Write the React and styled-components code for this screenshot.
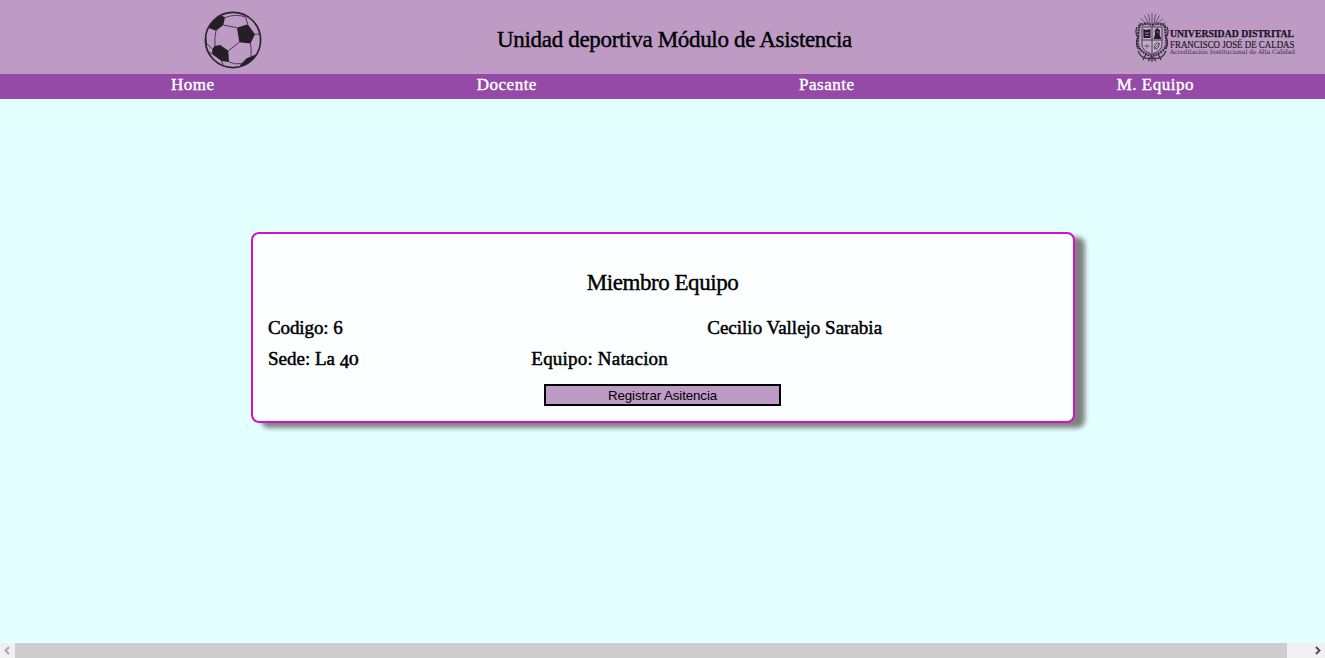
import React from "react";
import styled, { createGlobalStyle } from "styled-components";

const GlobalStyle = createGlobalStyle`
  * { box-sizing: border-box; }
  body { margin: 0; background: #e3ffff; overflow: hidden; }
`;

const Page = styled.div`
  height: 658px;
  display: flex;
  flex-direction: column;
  font-family: "Liberation Serif", serif;
  color: #000;
`;

const Header = styled.header`
  height: 74px;
  flex: none;
  display: grid;
  grid-template-columns: 466px 417px 1fr;
  align-items: center;
  background: #bd9bc5;
`;

const BallIcon = styled.svg`
  width: 60px;
  height: 60px;
  justify-self: center;
  margin-top: 6px;
`;

const CrestLogo = styled.svg`
  width: 172px;
  height: 56px;
  justify-self: end;
  margin-right: 19px;
`;

const Heading = styled.h1`
  margin: 0;
  padding-top: ${(p) => p.$offset || 0}px;
  text-align: center;
  white-space: nowrap;
  font-size: 23px;
  line-height: 30px;
  font-weight: 400;
  letter-spacing: ${(p) => p.$tracking}px;
  -webkit-text-stroke: 0.4px #000;
`;

const Nav = styled.nav`
  height: 25px;
  flex: none;
  display: flex;
  justify-content: space-around;
  padding-left: 40px;
  background: #954aa8;
`;

const NavLink = styled.a`
  color: #fff;
  font-size: 17px;
  line-height: 22px;
  letter-spacing: 0.5px;
  -webkit-text-stroke: 0.4px #fff;
`;

const Main = styled.main`
  flex: 1;
  padding-top: 133px;
`;

const Card = styled.section`
  width: 824px;
  height: 191px;
  margin-left: 251px;
  padding: 34px 15px 0;
  background: #fcffff;
  border: 2px solid #d210cf;
  border-radius: 8px;
  box-shadow: 10px 5px 5px gray;
`;

const CardTitle = styled(Heading)`
  padding-right: 1px;
`;

const Row = styled.div`
  display: grid;
  grid-template-columns: repeat(3, 1fr);
  height: 31px;
  margin-top: ${(p) => p.$gap || 0}px;
`;

const Field = styled.span`
  grid-column: span ${(p) => p.$span || 1};
  text-align: ${(p) => (p.$center ? "center" : "left")};
  white-space: nowrap;
  font-size: 19px;
  line-height: 31px;
  letter-spacing: ${(p) => p.$tracking || 0}px;
  -webkit-text-stroke: 0.5px #000;
`;

const LowDigit = styled.span`
  display: inline-block;
  line-height: 1;
  transform: ${(p) => (p.$flat ? "scale(1.05, 0.74)" : "translateY(3px)")};
  transform-origin: 50% 81%;
`;

const RegisterButton = styled.button`
  display: block;
  width: 237px;
  height: 22px;
  margin: 10px 0 0 276px;
  padding: 1px 0 0;
  border: 2px solid #000;
  background: #bd9bc5;
  color: #000;
  font: 13.33px/17px "Liberation Sans", sans-serif;
  letter-spacing: -0.1px;
`;

const ScrollBar = styled.div`
  height: 15px;
  flex: none;
  display: grid;
  grid-template-columns: 15px 1272px 1fr;
  background: #f0f0f0;
`;

const ScrollThumb = styled.div`
  background: #cdcdcd;
`;

const ScrollArrow = styled.svg`
  width: 15px;
  height: 15px;
  justify-self: ${(p) => (p.$end ? "end" : "start")};
  fill: none;
  stroke: ${(p) => (p.$end ? "#505050" : "#a8a8a8")};
  stroke-width: 2;
`;

function Ball() {
  return (
    <BallIcon viewBox="203 10 60 60">
      <clipPath id="ball"><circle cx="233" cy="40" r="27.5" /></clipPath>
      <g clipPath="url(#ball)" fill="#231f24">
        <path d="M212 18 Q217 13 222 15.5 L225 17.5 L223.3 25 L216 30.7 L208 27.7Z" />
        <path d="M237 27.7 L247.7 24.3 L255 34.3 L250.5 43.5 L239.3 42.3Z" />
        <path d="M212.5 49 L214.5 46 L220.3 45 L228.3 50.7 L229 62 L221.5 61 L212 54Z" />
        <path d="M240 65 L246.7 58.3 L256 54.5 L250 64 L241 69Z" />
        <path d="M204 34 L206.3 37 L207 48 L204 48Z" />
        <g fill="none" stroke="#3a323d" strokeWidth="0.9">
          <path d="M225 17.5 Q236 13.5 245.5 17 L247.7 24.3 M223.3 25 L237 27.7 M216 30.7 Q214.3 38 215 46 M228.3 50.7 L239.3 42.3 M250.5 43.5 Q251.5 50 251 56.5 M229 62 Q236 65 241 63.5 M255 34.3 L260 34 M212.5 49 L207 44 M212 54 L209 52 M208 27.7 L206 34 M221.5 61 L224 67" />
        </g>
      </g>
      <circle cx="233" cy="40" r="27.6" fill="none" stroke="#29232b" strokeWidth="1.7" />
    </BallIcon>
  );
}

function University() {
  return (
    <CrestLogo viewBox="1134 9 172 56">
      <g fill="none" stroke="#3d3143" strokeWidth="0.7">
        <path d="M1152 13V23 M1148.5 14L1150 23 M1155.5 14L1154 23 M1144.5 15.5L1148.5 23.5 M1159.5 15.5L1155.5 23.5 M1141 18.5L1146.5 24 M1163 18.5L1157.5 24 M1138.5 22.5L1144 25 M1165.5 22.5L1160 25" />
        <path d="M1139 26 Q1145 22 1152 25 Q1159 22 1165 26 L1166.5 44 Q1164 53 1152 56 Q1140 53 1137.5 44Z" strokeWidth="2.4" strokeDasharray="2 0.7" />
        <path d="M1142 27H1162V44Q1162 51 1152 54Q1142 51 1142 44Z" fill="#c5aacc" strokeWidth="0.9" />
        <path d="M1152 27V53 M1142 40H1162" strokeWidth="0.9" />
        <path d="M1137 27Q1134.5 33 1138 37Q1135 43 1138 49 M1167 27Q1169.5 33 1166 37Q1169 43 1166 49 M1138 51Q1142 60 1150 58 M1166 51Q1162 60 1154 58 M1143 60L1146 54 M1161 60L1158 54 M1152 56V62 M1148 61L1152 57L1156 61" strokeWidth="1.3" />
        <path d="M1144 46H1150 M1147 44V49" strokeWidth="0.6" />
        <ellipse cx="1156.7" cy="46" rx="2" ry="3.4" transform="rotate(25 1156.7 46)" />
        <path d="M1154 49L1160 43" />
      </g>
      <path d="M1143.3 29L1146 30L1150.5 29V38H1143.5Z M1153.5 39L1155 34.5L1154.7 30L1157.5 28L1160 30.5L1159.5 34.5L1161.3 39Z" fill="#241c28" />
      <path d="M1145 33H1149 M1145.5 35.5H1148.5 M1156.5 32H1158.5" stroke="#bd9bc5" strokeWidth="0.9" />
      <g fontFamily="Liberation Serif, serif" fill="#18121b">
        <text x="1170" y="37" fontSize="10.8" fontWeight="700" stroke="#18121b" strokeWidth="0.25" textLength="124" lengthAdjust="spacingAndGlyphs">UNIVERSIDAD DISTRITAL</text>
        <text x="1170" y="48" fontSize="10.8" stroke="#18121b" strokeWidth="0.15" textLength="124.5" lengthAdjust="spacingAndGlyphs">FRANCISCO JOSÉ DE CALDAS</text>
        <text x="1170" y="54.3" fontSize="6.2" fontFamily="DejaVu Serif, serif" fill="#34293a" textLength="125" lengthAdjust="spacingAndGlyphs">Acreditación Institucional de Alta Calidad</text>
      </g>
    </CrestLogo>
  );
}

export default function App() {
  return (
    <Page>
      <GlobalStyle />
      <Header>
        <Ball />
        <Heading $offset={5} $tracking={-0.32}>Unidad deportiva Módulo de Asistencia</Heading>
        <University />
      </Header>
      <Nav>
        {["Home", "Docente", "Pasante", "M. Equipo"].map((label) => (
          <NavLink key={label}>{label}</NavLink>
        ))}
      </Nav>
      <Main>
        <Card>
          <CardTitle as="h2" $tracking={-0.45}>Miembro Equipo</CardTitle>
          <Row $gap={14}>
            <Field $tracking={-0.1}>Codigo: 6</Field>
            <Field $span={2} $center>Cecilio Vallejo Sarabia</Field>
          </Row>
          <Row>
            <Field>
              Sede: La <LowDigit>4</LowDigit><LowDigit $flat>0</LowDigit>
            </Field>
            <Field $tracking={0.2}>Equipo: Natacion</Field>
          </Row>
          <RegisterButton>Registrar Asitencia</RegisterButton>
        </Card>
      </Main>
      <ScrollBar>
        <ScrollArrow viewBox="0 0 15 15"><path d="M9 4L5.5 7.5L9 11" /></ScrollArrow>
        <ScrollThumb />
        <ScrollArrow $end viewBox="0 0 15 15"><path d="M6 4L9.5 7.5L6 11" /></ScrollArrow>
      </ScrollBar>
    </Page>
  );
}
